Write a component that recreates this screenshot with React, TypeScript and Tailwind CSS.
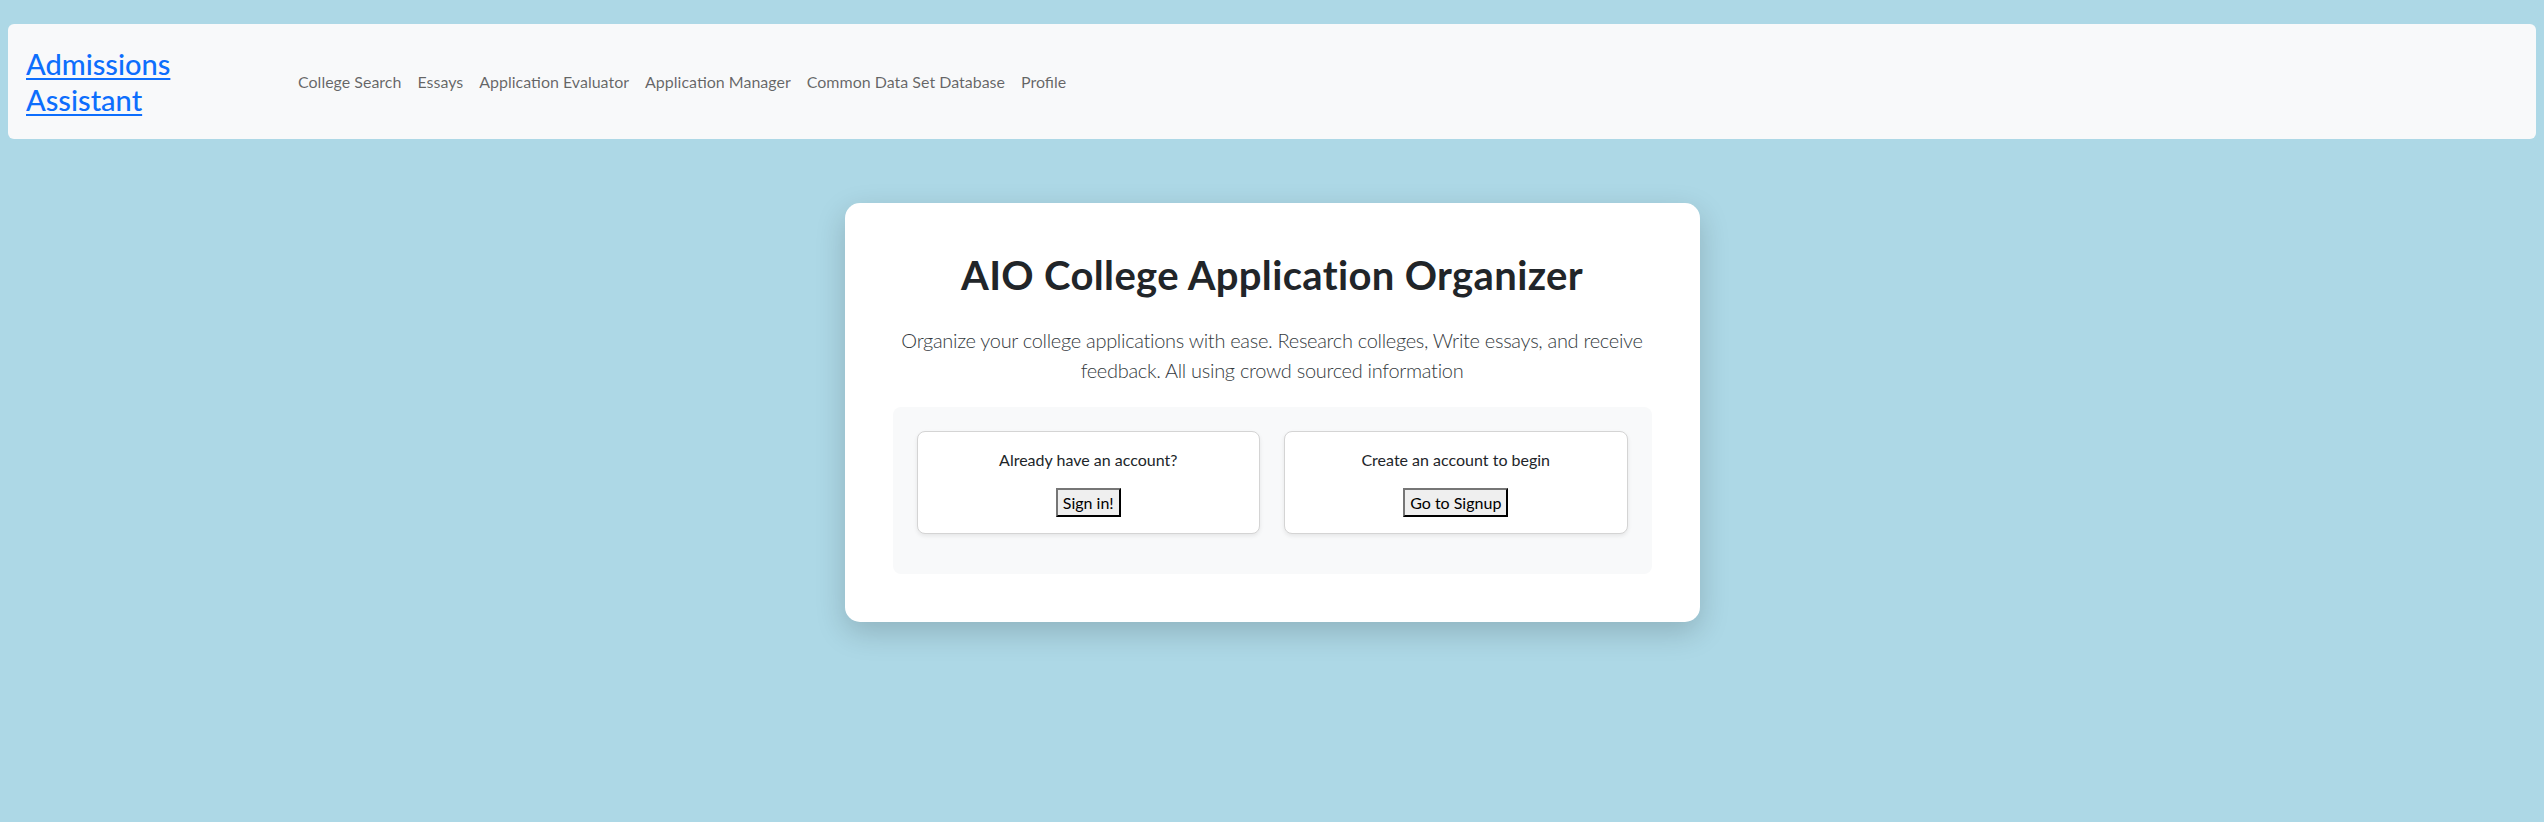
import React from "react";

const navLinks = [
  "College Search",
  "Essays",
  "Application Evaluator",
  "Application Manager",
  "Common Data Set Database",
  "Profile",
];

const AuthCard = ({ label, action }: { label: string; action: string }) => (
  <div className="flex-1 rounded-lg border border-[#d4d4d4] bg-white p-4 text-center shadow-[0_2px_4px_rgba(0,0,0,0.08)]">
    <p className="mb-4 text-[16px] leading-6 text-[#212529]">{label}</p>
    <button
      type="button"
      className="h-[29px] border-2 border-t-[#767676] border-l-[#767676] border-r-black border-b-black bg-[#efefef] px-[5px] text-[16px] leading-5 text-black"
    >
      {action}
    </button>
  </div>
);

export default function App() {
  return (
    <div className="min-h-screen bg-[#add8e6] pt-6 font-['Lato',sans-serif]">
      {/* Navbar */}
      <nav className="mx-2 flex h-[115px] items-center rounded-md bg-[#f8f9fa] pl-[18px]">
        <div className="w-[264px]">
          <a
            href="#"
            className="block w-[160px] text-[29px] font-medium leading-9 text-[#0d6efd] underline underline-offset-[3px]"
          >
            Admissions Assistant
          </a>
        </div>
        <ul className="flex items-center">
          {navLinks.map((l) => (
            <li key={l}>
              <a href="#" className="block px-2 text-[16px] text-black/60">
                {l}
              </a>
            </li>
          ))}
        </ul>
      </nav>

      {/* Hero card */}
      <div className="mt-16 flex justify-center">
        <div className="w-[855px] rounded-[15px] bg-white p-12 shadow-[0_10px_30px_rgba(0,0,0,0.18)]">
          <h1 className="mb-[26px] text-center text-[40px] font-bold leading-[48px] tracking-[0.35px] text-[#212529]">
            AIO College Application Organizer
          </h1>
          <p className="mb-[22px] text-center text-[20px] font-light leading-[30px] tracking-[-0.3px] text-[#343a40]">
            Organize your college applications with ease. Research colleges, Write essays, and receive
            feedback. All using crowd sourced information
          </p>
          <div className="rounded-lg bg-[#f8f9fa] px-6 pt-6 pb-10">
            <div className="flex gap-6">
              <AuthCard label="Already have an account?" action="Sign in!" />
              <AuthCard label="Create an account to begin" action="Go to Signup" />
            </div>
          </div>
        </div>
      </div>
    </div>
  );
}
